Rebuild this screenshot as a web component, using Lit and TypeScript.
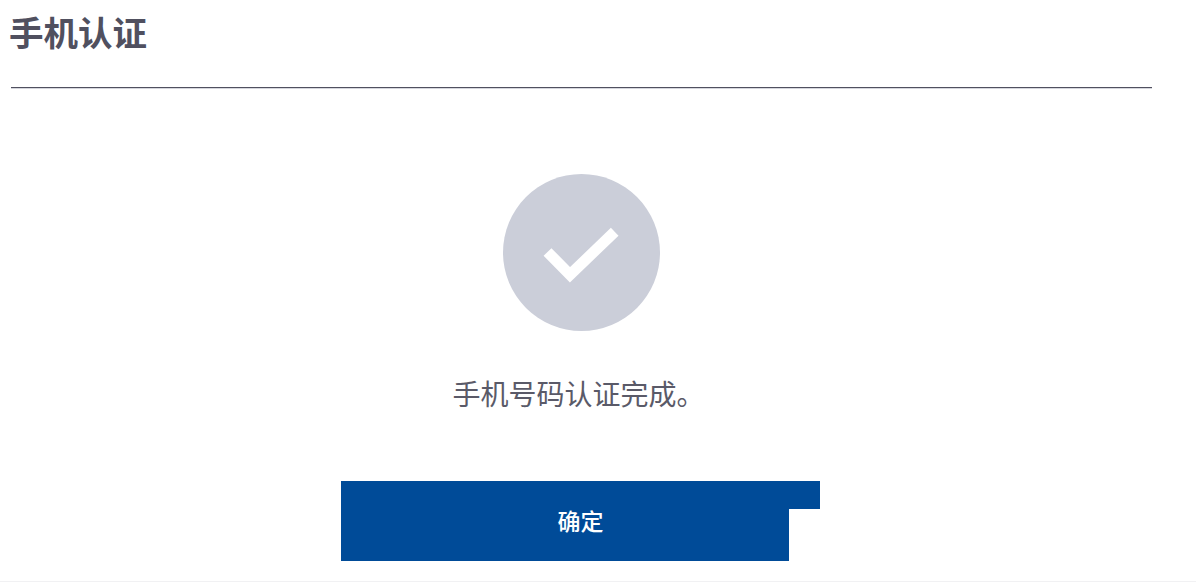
import { LitElement, html, css } from "lit";
import { customElement } from "lit/decorators.js";

@customElement("app-root")
export class AppRoot extends LitElement {
  static styles = css`
    :host {
      display: block;
      width: 1196px;
      height: 582px;
      box-sizing: border-box;
      background: #fff;
      border-bottom: 1px solid #f1f1f3;
      overflow: hidden;
      font-family: "Noto Sans CJK SC", "Noto Sans CJK KR", "Liberation Sans", sans-serif;
    }
    .panel {
      display: flex;
      flex-direction: column;
      width: 1141px;
      margin-left: 11px;
    }
    .head {
      height: 87px;
      border-bottom: 1px solid #50505f;
      box-shadow: 0 1px 0 #d5d6dd;
    }
    h1 {
      margin: 6px 0 0 -2px;
      font-size: 34.5px;
      line-height: 50px;
      font-weight: 700;
      color: #50505f;
    }
    .body {
      display: flex;
      flex-direction: column;
      align-items: center;
      padding-top: 86px;
    }
    .badge {
      display: block;
      width: 157px;
      height: 157px;
      flex: none;
    }
    p {
      margin: 42px 6px 0 0;
      font-size: 28px;
      line-height: 40px;
      font-weight: 400;
      color: #5a5a68;
    }
    button {
      display: block;
      width: 479px;
      height: 80px;
      margin: 68px 2px 0 0;
      padding: 0 0 3px;
      border: 0;
      background: #004b98;
      color: #fff;
      font: inherit;
      font-size: 23px;
      font-weight: 500;
      clip-path: polygon(0 0, 100% 0, 100% 28px, 448px 28px, 448px 100%, 0 100%);
    }
  `;

  render() {
    return html`
      <section class="panel">
        <header class="head"><h1>手机认证</h1></header>
        <div class="body">
          <svg class="badge" viewBox="0 0 157 157" aria-hidden="true">
            <circle cx="78.5" cy="78.5" r="78.5" fill="#cbced9"></circle>
            <polyline points="44.5,78 67,100.8 111.7,57.7" fill="none" stroke="#fff" stroke-width="11"></polyline>
          </svg>
          <p>手机号码认证完成。</p>
          <button type="button">确定</button>
        </div>
      </section>
    `;
  }
}
